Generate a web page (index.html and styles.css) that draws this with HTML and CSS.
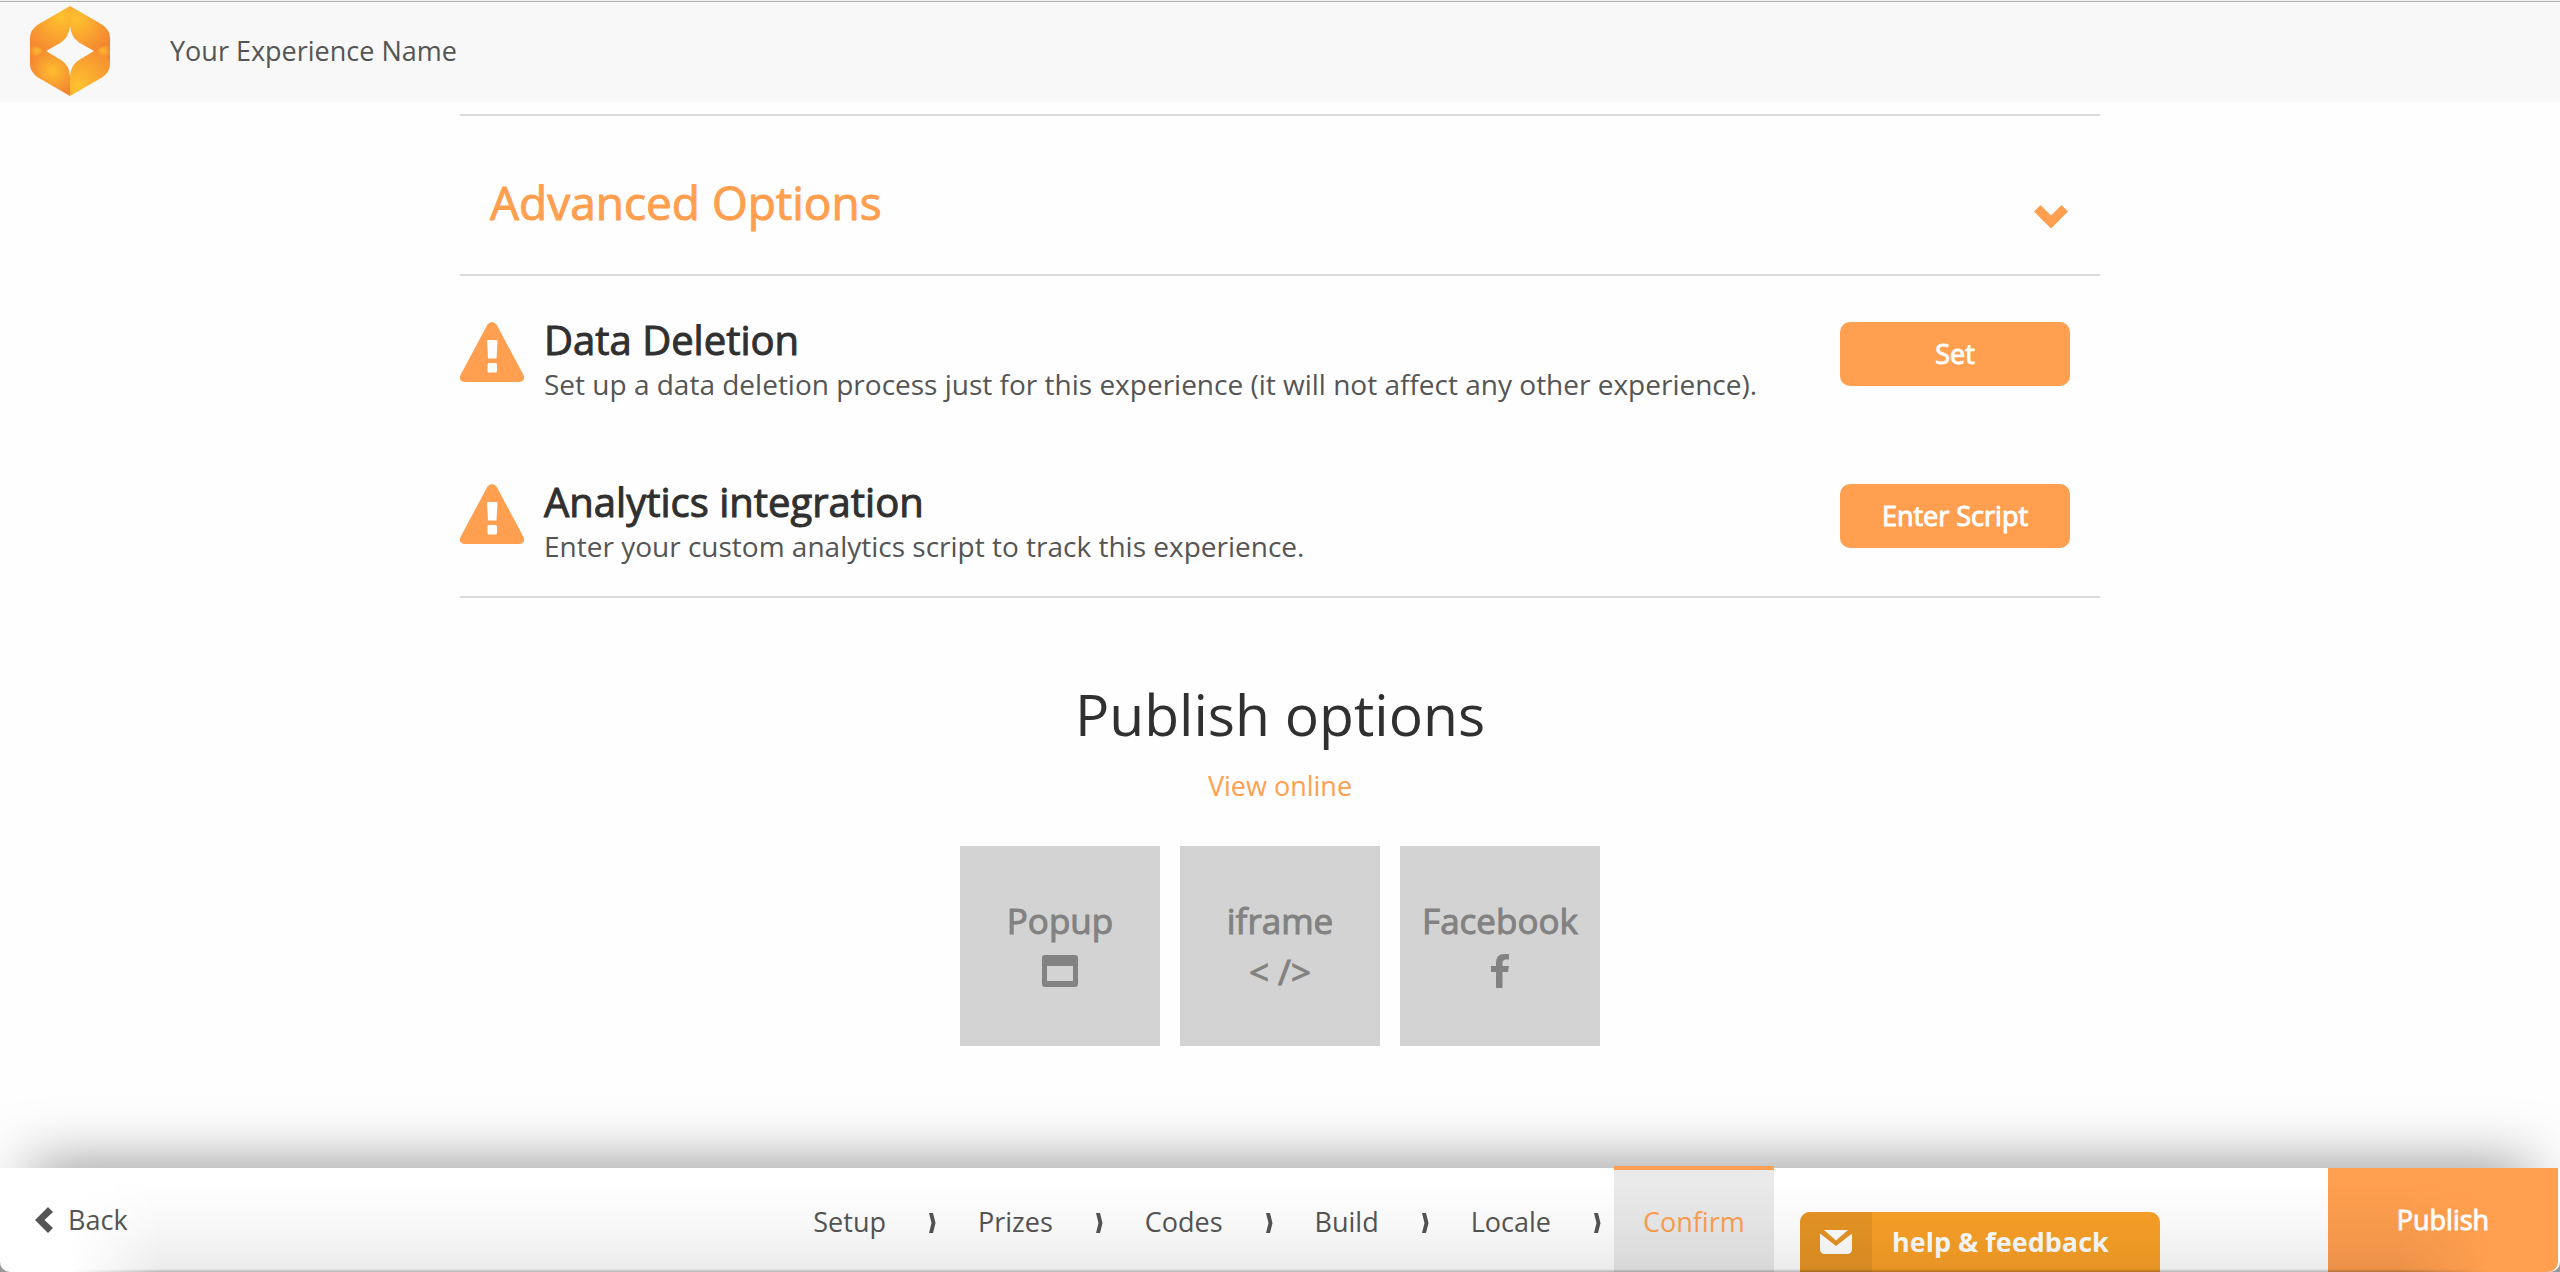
FILE: index.html
```html
<!DOCTYPE html>
<html lang="en">
<head>
<meta charset="utf-8">
<meta name="viewport" content="width=device-width, initial-scale=1">
<title>Confirm - Your Experience Name</title>
<link rel="stylesheet" href="styles.css">
</head>
<body>
<header class="topbar">
  <a class="logo" href="#" aria-label="Home">
    <svg width="80" height="90" viewBox="0 0 80 90" aria-hidden="true">
      <defs>
        <radialGradient id="tl" gradientUnits="userSpaceOnUse" cx="31" cy="11" r="42"><stop offset="0" stop-color="#fec22f"/><stop offset="1" stop-color="#f58431"/></radialGradient>
        <radialGradient id="tr" gradientUnits="userSpaceOnUse" cx="46" cy="13" r="40"><stop offset="0" stop-color="#fec22f"/><stop offset="1" stop-color="#f58431"/></radialGradient>
        <radialGradient id="bl" gradientUnits="userSpaceOnUse" cx="23" cy="65" r="26"><stop offset="0" stop-color="#fdbe2f"/><stop offset="1" stop-color="#f58231"/></radialGradient>
        <radialGradient id="br" gradientUnits="userSpaceOnUse" cx="48" cy="80" r="50"><stop offset="0" stop-color="#fec22f"/><stop offset="1" stop-color="#f58431"/></radialGradient>
        <radialGradient id="sl" gradientUnits="userSpaceOnUse" cx="7" cy="45" r="8"><stop offset="0" stop-color="#fdb92f"/><stop offset="1" stop-color="#f58431"/></radialGradient>
        <radialGradient id="sr" gradientUnits="userSpaceOnUse" cx="73" cy="45" r="8"><stop offset="0" stop-color="#fdb92f"/><stop offset="1" stop-color="#f58431"/></radialGradient>
      </defs>
      <path fill="url(#tl)" d="M40 0 8 18.500Q0 24 0 32V45H16L31 36.500Q39 31 40 20Z"/>
      <path fill="url(#tr)" d="M40 0 72 18.500Q80 24 80 32V45H64L49 36.500Q41 31 40 20Z"/>
      <path fill="url(#bl)" d="M40 90 8 71.500Q0 66 0 58V45H16L31 54Q39 59 40 70Z"/>
      <path fill="url(#br)" d="M40 90 72 71.500Q80 66 80 58V45H64L49 54Q41 59 40 70Z"/>
      <path fill="url(#sl)" d="M0 37Q6 40 16 45 6 50 0 54Z"/>
      <path fill="url(#sr)" d="M80 37Q74 40 64 45 74 50 80 54Z"/>
    </svg>
  </a>
  <span class="experience">Your Experience Name</span>
</header>

<main class="page">
  <div class="content">
    <section class="options">
      <div class="options-head">
        <h2 class="options-title">Advanced Options</h2>
        <button class="toggle" type="button" aria-label="Collapse advanced options" aria-expanded="true">
          <svg width="34" height="24" viewBox="0 0 34 24" aria-hidden="true"><path fill="#ff9f4f" d="M0 6.500 6.500 0 17 10.500 27.500 0 34 6.500 17 23.500Z"/></svg>
        </button>
      </div>
      <div class="options-list">
        <div class="option">
          <svg class="warning" width="64" height="60" viewBox="0 0 64 60" aria-hidden="true"><path fill="#ff9f4f" fill-rule="evenodd" d="M27.500 2.500Q32-2.500 36.500 2.500L63.500 53Q66 59 59 60H5Q-2 59 .5 53ZM27 19 28 36.500H36.500L37.500 19Q37.500 18 36 18H28Q27 18 27 19ZM27.500 42.500V49Q27.500 50.500 29 50.500H35.500Q37 50.500 37 49V42.500Q37 41 35.500 41H29Q27.500 41 27.500 42.500Z"/></svg>
          <div class="option-text">
            <h3 class="option-title">Data Deletion</h3>
            <p class="option-note">Set up a data deletion process just for this experience (it will not affect any other experience).</p>
          </div>
          <button class="action" type="button">Set</button>
        </div>
        <div class="option">
          <svg class="warning" width="64" height="60" viewBox="0 0 64 60" aria-hidden="true"><path fill="#ff9f4f" fill-rule="evenodd" d="M27.500 2.500Q32-2.500 36.500 2.500L63.500 53Q66 59 59 60H5Q-2 59 .5 53ZM27 19 28 36.500H36.500L37.500 19Q37.500 18 36 18H28Q27 18 27 19ZM27.500 42.500V49Q27.500 50.500 29 50.500H35.500Q37 50.500 37 49V42.500Q37 41 35.500 41H29Q27.500 41 27.500 42.500Z"/></svg>
          <div class="option-text">
            <h3 class="option-title">Analytics integration</h3>
            <p class="option-note">Enter your custom analytics script to track this experience.</p>
          </div>
          <button class="action" type="button">Enter Script</button>
        </div>
      </div>
    </section>

    <section class="publish-options">
      <h1 class="publish-title">Publish options</h1>
      <a class="view-online" href="#">View online</a>
      <div class="tiles">
        <button class="tile" type="button">
          <span>Popup</span>
          <span class="tile-icon"><svg width="38" height="34" viewBox="0 0 38 34" aria-hidden="true"><path fill="#828282" fill-rule="evenodd" d="M4 1H34Q37 1 37 4V30Q37 33 34 33H4Q1 33 1 30V4Q1 1 4 1ZM6 12V27H32V12Z"/></svg></span>
        </button>
        <button class="tile" type="button">
          <span>iframe</span>
          <span class="tile-icon">&lt; /&gt;</span>
        </button>
        <button class="tile" type="button">
          <span>Facebook</span>
          <span class="tile-icon"><svg width="18" height="34" viewBox="0 0 18 34" aria-hidden="true"><path fill="#828282" d="M5 34V18H0V12H5V9Q5 0 13 0H18V5.500H15Q11.500 5.500 11.500 9V12H18L17 18H11.500V34Z"/></svg></span>
        </button>
      </div>
    </section>
  </div>
</main>

<footer class="bottombar">
  <a class="back" href="#">
    <svg width="18" height="26" viewBox="0 0 18 26" aria-hidden="true"><path fill="#555" d="M13 0 18 5 9.500 13 18 21 13 26 0 13Z"/></svg>
    Back
  </a>
  <nav class="steps" aria-label="Steps">
    <a class="step" href="#">Setup</a>
    <svg class="step-sep" width="34" height="20" viewBox="0 0 34 20" aria-hidden="true"><path fill="#555" d="M14 0H18L20.500 10 18 20H14L16.500 10Z"/></svg>
    <a class="step" href="#">Prizes</a>
    <svg class="step-sep" width="34" height="20" viewBox="0 0 34 20" aria-hidden="true"><path fill="#555" d="M14 0H18L20.500 10 18 20H14L16.500 10Z"/></svg>
    <a class="step" href="#">Codes</a>
    <svg class="step-sep" width="34" height="20" viewBox="0 0 34 20" aria-hidden="true"><path fill="#555" d="M14 0H18L20.500 10 18 20H14L16.500 10Z"/></svg>
    <a class="step" href="#">Build</a>
    <svg class="step-sep" width="34" height="20" viewBox="0 0 34 20" aria-hidden="true"><path fill="#555" d="M14 0H18L20.500 10 18 20H14L16.500 10Z"/></svg>
    <a class="step" href="#">Locale</a>
    <svg class="step-sep" width="34" height="20" viewBox="0 0 34 20" aria-hidden="true"><path fill="#555" d="M14 0H18L20.500 10 18 20H14L16.500 10Z"/></svg>
    <a class="step step-current" href="#" aria-current="step">Confirm</a>
  </nav>
  <button class="publish" type="button">Publish</button>
  <button class="help" type="button">
    <span class="help-icon"><svg width="32" height="24" viewBox="0 0 32 24" aria-hidden="true"><path fill="#fff" d="M4 0H28L16 10.500ZM0 3.500 16 16 32 3.500V19Q32 24 27 24H5Q0 24 0 19Z"/></svg></span>
    <span class="help-label">help &amp; feedback</span>
  </button>
</footer>
</body>
</html>
```
FILE: styles.css
```css
* {
  box-sizing: border-box;
}

html {
  background: #999;
}

body {
  display: flex;
  flex-direction: column;
  min-height: 100vh;
  margin: 0;
  color: #555;
  font: 27px/40px "Open Sans", "Noto Sans", sans-serif;
}

h1,
h2,
h3,
p {
  margin: 0;
}

a {
  color: inherit;
  text-decoration: none;
}

button {
  padding: 0;
  border: 0;
  background: none;
  font: inherit;
  cursor: pointer;
}

svg {
  display: block;
  flex: none;
}

/* Medium weight, between the regular and semibold faces */
.options-title,
.option-title,
.action,
.tile,
.publish {
  font-weight: 400;
  -webkit-text-stroke: 1px currentColor;
}

/* Top bar */
.topbar {
  display: flex;
  align-items: center;
  gap: 60px;
  height: 102px;
  padding: 0 30px 2px;
  background: #f8f8f8;
  border-top: 1px solid #eee;
  box-shadow: inset 0 1px #b2b5b2;
}

/* Page content */
.page {
  flex: 1;
  padding: 12px 30px 80px;
  background: #fefefe;
}

.content {
  max-width: 1640px;
  margin: 0 auto;
}

.options {
  border-top: 2px solid #dadada;
  border-bottom: 2px solid #dadada;
}

.options-head {
  display: flex;
  align-items: flex-end;
  justify-content: space-between;
  padding: 54px 32px 40px 30px;
  border-bottom: 2px solid #dadada;
}

.options-title {
  color: #ff9f4f;
  font-size: 46px;
  line-height: 64px;
}

.toggle {
  padding-bottom: 5px;
}

.options-list {
  display: flex;
  flex-direction: column;
  gap: 74px;
  padding: 42px 30px 28px 0;
}

.option {
  display: flex;
  align-items: flex-start;
}

.warning,
.action {
  margin-top: 4px;
}

.option-text {
  flex: 1;
  padding: 0 20px;
  line-height: 44px;
}

.option-title {
  color: #303030;
  font-size: 40px;
}

.option-note {
  font-size: 28px;
}

.action {
  flex: none;
  width: 230px;
  height: 64px;
  border-radius: 10px;
  background: #ff9f4f;
  color: #fff;
}

/* Publish options */
.publish-options {
  display: flex;
  flex-direction: column;
  align-items: center;
  padding-top: 80px;
}

.publish-title {
  color: #303030;
  font-size: 57px;
  font-weight: 400;
  line-height: 72px;
}

.view-online {
  margin: 16px 0 40px;
  color: #ff9f4f;
}

.tiles {
  display: flex;
  gap: 20px;
}

.tile {
  display: flex;
  flex-direction: column;
  align-items: center;
  gap: 8px;
  width: 200px;
  height: 200px;
  padding-top: 50px;
  background: #d3d3d3;
  color: #828282;
  font-size: 35px;
  line-height: 50px;
}

.tile-icon {
  line-height: 36px;
}

/* Bottom bar */
.bottombar {
  position: relative;
  display: grid;
  grid-template-columns: 1fr auto 1fr;
  height: 104px;
  padding-right: 2px;
  background: #fff;
  border-radius: 0 0 10px 10px;
  box-shadow: 0 -30px 60px -30px rgba(0, 0, 0, 0.5);
}

/* Soft shade that rises from the lower edge of the bar */
.bottombar::after {
  content: "";
  position: absolute;
  inset: 0;
  background:
    linear-gradient(to top, rgba(0, 0, 0, 0.24), transparent 3px),
    linear-gradient(to top, rgba(0, 0, 0, 0.08), rgba(0, 0, 0, 0.03) 44px, transparent 90px);
  mask-image: linear-gradient(to right, transparent 70px, #000 160px, #000 calc(100% - 160px), transparent calc(100% - 70px));
  pointer-events: none;
}

.back {
  display: flex;
  align-items: center;
  justify-self: start;
  gap: 15px;
  padding-left: 35px;
}

.steps {
  display: flex;
  align-items: center;
  margin-top: -2px;
}

.step {
  display: flex;
  align-items: center;
  align-self: stretch;
  padding: 2px 29px 0;
  border-top: 4px solid transparent;
}

.step-sep {
  margin-top: 8px;
}

.step-current {
  border-top-color: #ff9f4f;
  background: #eaeaea;
  color: #ff9f4f;
}

.publish {
  justify-self: end;
  width: 230px;
  border-radius: 0 0 10px 0;
  background: #ff9f4f;
  color: #fff;
}

.help {
  position: absolute;
  right: 400px;
  bottom: 0;
  display: flex;
  width: 360px;
  height: 60px;
  overflow: hidden;
  border-radius: 10px 10px 0 0;
  background: #f9a128;
  color: #fff;
  font-weight: 700;
}

.help-icon {
  display: flex;
  align-items: center;
  justify-content: center;
  width: 72px;
  height: 60px;
  background: #e79525;
}

.help-label {
  padding: 10px 20px;
}
```
